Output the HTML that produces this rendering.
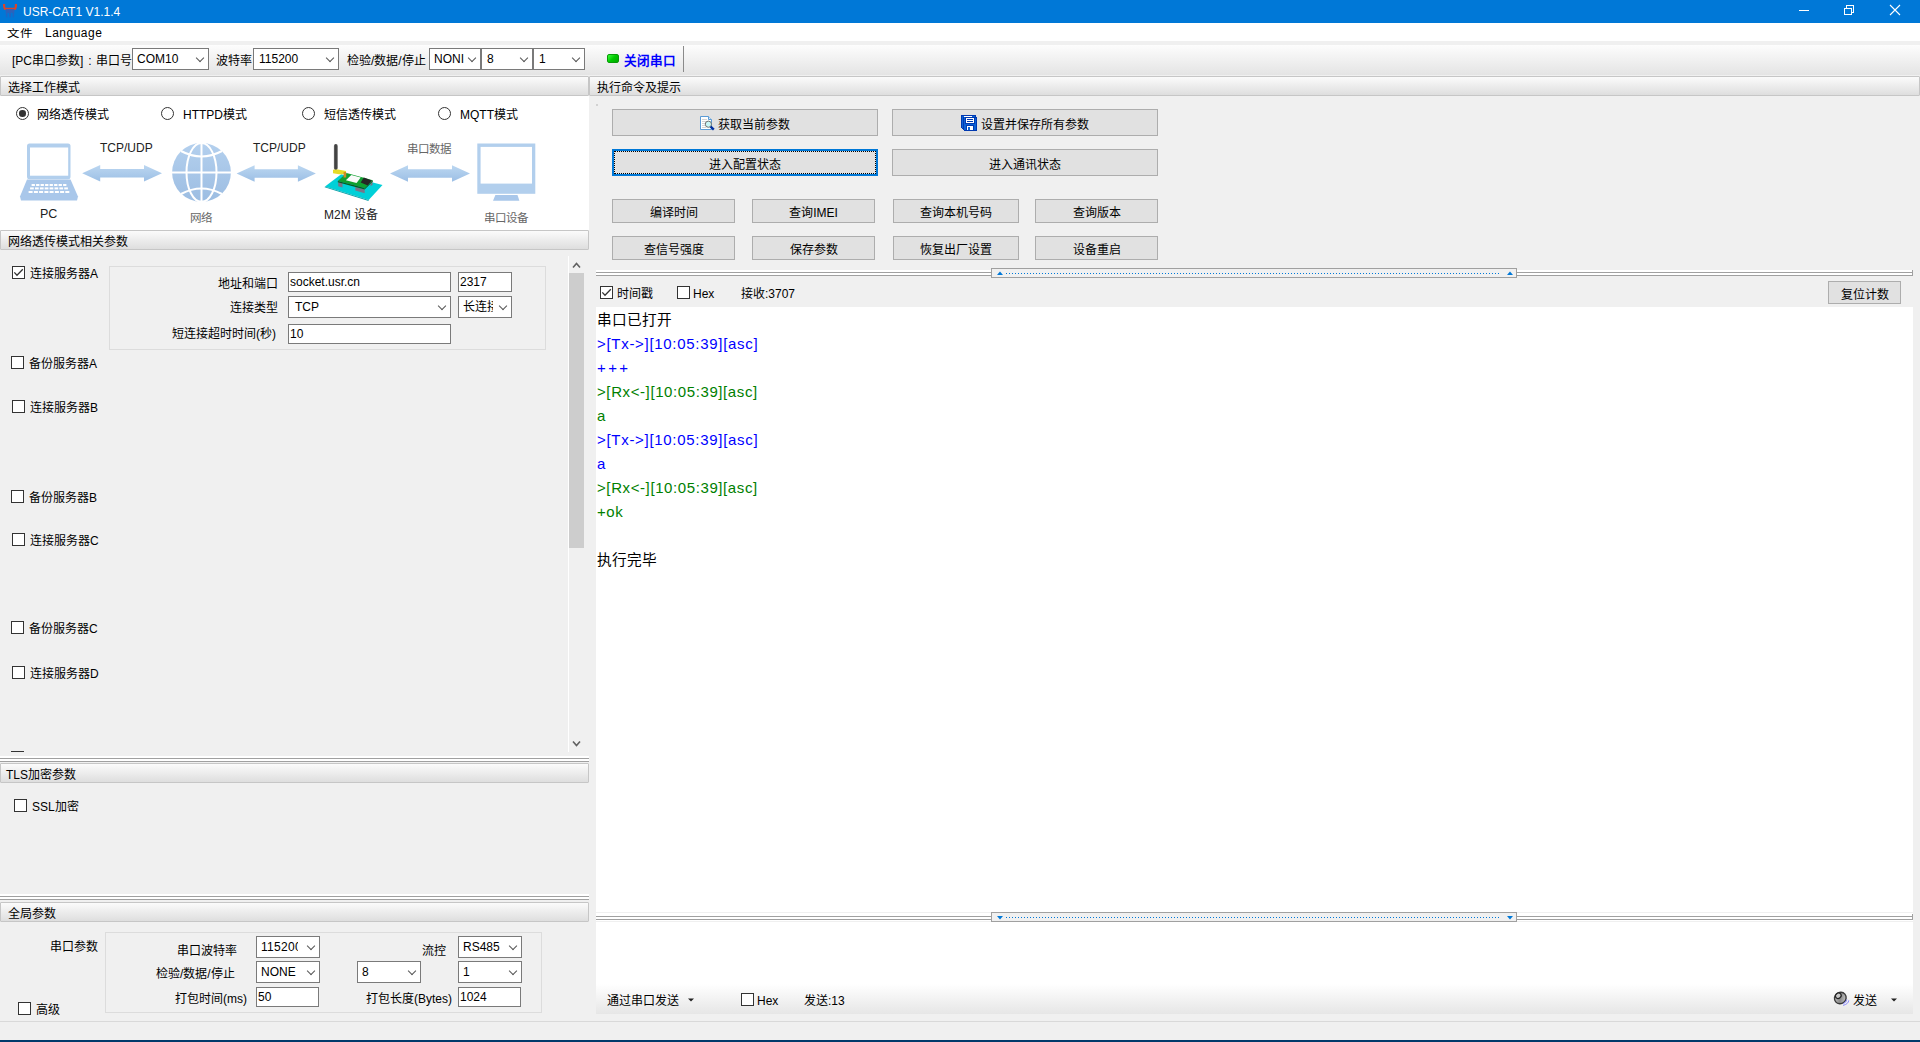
<!DOCTYPE html>
<html lang="zh-CN">
<head>
<meta charset="utf-8">
<style>
*{margin:0;padding:0;box-sizing:border-box;}
html,body{width:1920px;height:1042px;overflow:hidden;background:#f0f0f0;font-family:"Liberation Sans",sans-serif;font-size:12px;color:#000;}
.a{position:absolute;}
.t{position:absolute;white-space:nowrap;line-height:16px;}
.hdr{position:absolute;height:20px;border:1px solid #c6c6c6;border-radius:1px;background:linear-gradient(#fbfbfb,#dedede);}
.hdr span{position:absolute;left:7px;top:4px;line-height:14px;white-space:nowrap;}
.btn{position:absolute;background:#e1e1e1;border:1px solid #adadad;text-align:center;line-height:26px;white-space:nowrap;}
.inp{position:absolute;background:#fff;border:1px solid #7a7a7a;line-height:18px;padding-left:1px;white-space:nowrap;overflow:hidden;}
.cmb{position:absolute;background:#fff;border:1px solid #7a7a7a;line-height:20px;padding-left:3px;white-space:nowrap;overflow:hidden;}
.cmb i{position:absolute;right:5px;top:6px;width:6px;height:6px;border-right:1px solid #555;border-bottom:1px solid #555;transform:rotate(45deg);}
.cb{position:absolute;width:13px;height:13px;border:1px solid #333;background:#fff;}
.rd{position:absolute;width:13px;height:13px;border:1px solid #333;border-radius:50%;background:#fff;}
.grp{position:absolute;border:1px solid #dcdcdc;}
.spl{position:absolute;height:6px;border-top:1px solid #fff;}
</style>
</head>
<body>
<!-- title bar -->
<div class="a" style="left:0;top:0;width:1920px;height:23px;background:#0078d7;"></div>
<svg class="a" style="left:3px;top:3px;" width="14" height="16" viewBox="0 0 14 16">
<defs><linearGradient id="ib" x1="0" y1="0" x2="0" y2="1"><stop offset="0" stop-color="#3a5fb0"/><stop offset="1" stop-color="#2a5cc0" stop-opacity="0.5"/></linearGradient></defs>
<path d="M1,1 Q1,5 2,5.8 H12 Q13,5 13,1" fill="none" stroke="#d8452a" stroke-width="2.2"/>
<path d="M2.5,6 H11.5 L11,14.5 H9.5 V10 H8 V14.5 H6 V10 H4.5 V14.5 H3 Z" fill="url(#ib)"/>
</svg>
<div class="t" style="left:23px;top:4px;color:#fff;font-size:12px;">USR-CAT1 V1.1.4</div>
<div class="a" style="left:1799px;top:10px;width:10px;height:1px;background:#fff;"></div>
<svg class="a" style="left:1843px;top:4px;" width="13" height="13" viewBox="0 0 13 13" shape-rendering="crispEdges">
<rect x="1.5" y="4.5" width="7" height="6" fill="none" stroke="#fff" stroke-width="1"/>
<path d="M3.5,4.5 V1.5 H10.5 V8.5 H8.5" fill="none" stroke="#fff" stroke-width="1"/>
</svg>
<svg class="a" style="left:1889px;top:4px;" width="12" height="12" viewBox="0 0 12 12">
<path d="M1,1 L11,11 M11,1 L1,11" stroke="#fff" stroke-width="1.1"/>
</svg>
<!-- menu -->
<div class="a" style="left:0;top:23px;width:1920px;height:18px;background:#fff;"></div>
<div class="t" style="left:7px;top:25px;font-size:12.5px;transform:scaleY(0.86);transform-origin:0 12px;">文件</div>
<div class="t" style="left:45px;top:25px;letter-spacing:0.5px;">Language</div>
<!-- toolbar -->
<div class="a" style="left:0;top:45px;width:1920px;height:30px;background:linear-gradient(#fdfdfd,#e4e4e4);"></div>


<div class="t" style="left:12px;top:53px;">[PC串口参数]<span style="margin-left:5px;margin-right:4px;">:</span>串口号</div>
<div class="cmb" style="left:132px;top:48px;width:77px;height:22px;padding-left:4px;">COM10<i></i></div>
<div class="t" style="left:216px;top:53px;">波特率</div>
<div class="cmb" style="left:253px;top:48px;width:86px;height:22px;padding-left:5px;">115200<i></i></div>
<div class="t" style="left:347px;top:53px;">检验/数据/停止</div>
<div class="cmb" style="left:429px;top:48px;width:52px;height:22px;padding-left:4px;">NONI<i></i></div>
<div class="cmb" style="left:481px;top:48px;width:52px;height:22px;padding-left:5px;">8<i></i></div>
<div class="cmb" style="left:533px;top:48px;width:52px;height:22px;padding-left:5px;">1<i></i></div>
<div class="a" style="left:607px;top:54px;width:12px;height:9px;border:1px solid #079b07;border-radius:2px;background:linear-gradient(135deg,#3dff3d,#00c800 50%,#00a800);"></div>
<div class="t" style="left:624px;top:53px;color:#0000ff;font-weight:bold;font-size:12.6px;">关闭串口</div>
<div class="a" style="left:683px;top:46px;width:1px;height:26px;background:#8a8a8a;"></div>

<!-- left headers -->
<div class="hdr" style="left:0;top:76px;width:589px;"><span>选择工作模式</span></div>
<div class="a" style="left:0;top:96px;width:589px;height:134px;background:#fff;"></div>
<svg class="a" style="left:0;top:96px;" width="588" height="134" viewBox="0 0 588 134">
<defs><linearGradient id="ga" x1="0" y1="0" x2="0" y2="1"><stop offset="0" stop-color="#bcd7f1"/><stop offset="1" stop-color="#9cbfe5"/></linearGradient><linearGradient id="gb" x1="0" y1="0" x2="0" y2="1"><stop offset="0" stop-color="#b4d0ee"/><stop offset="1" stop-color="#9cbde2"/></linearGradient></defs>
<rect x="27" y="47.4" width="43.5" height="35.8" rx="2.5" fill="#b2cfed"/>
<rect x="30" y="51.5" width="38.2" height="28.2" fill="#fff"/>
<polygon points="27,83.5 70.5,83.5 78,100.5 77,104.5 21,104.5 20,100.5" fill="#a9c7ea"/>
<rect x="31.6" y="88.0" width="3.3" height="2" fill="#fff"/><rect x="36.1" y="88.0" width="3.3" height="2" fill="#fff"/><rect x="40.6" y="88.0" width="3.3" height="2" fill="#fff"/><rect x="45.1" y="88.0" width="3.3" height="2" fill="#fff"/><rect x="49.6" y="88.0" width="3.3" height="2" fill="#fff"/><rect x="54.1" y="88.0" width="3.3" height="2" fill="#fff"/><rect x="58.6" y="88.0" width="3.3" height="2" fill="#fff"/><rect x="63.1" y="88.0" width="3.3" height="2" fill="#fff"/><rect x="30.1" y="91.4" width="3.7" height="2" fill="#fff"/><rect x="35.0" y="91.4" width="3.7" height="2" fill="#fff"/><rect x="39.9" y="91.4" width="3.7" height="2" fill="#fff"/><rect x="44.7" y="91.4" width="3.7" height="2" fill="#fff"/><rect x="49.6" y="91.4" width="3.7" height="2" fill="#fff"/><rect x="54.5" y="91.4" width="3.7" height="2" fill="#fff"/><rect x="59.4" y="91.4" width="3.7" height="2" fill="#fff"/><rect x="64.2" y="91.4" width="3.7" height="2" fill="#fff"/><rect x="28.6" y="95.0" width="4.0" height="2" fill="#fff"/><rect x="33.9" y="95.0" width="4.0" height="2" fill="#fff"/><rect x="39.1" y="95.0" width="4.0" height="2" fill="#fff"/><rect x="44.4" y="95.0" width="4.0" height="2" fill="#fff"/><rect x="49.6" y="95.0" width="4.0" height="2" fill="#fff"/><rect x="54.9" y="95.0" width="4.0" height="2" fill="#fff"/><rect x="60.1" y="95.0" width="4.0" height="2" fill="#fff"/><rect x="65.3" y="95.0" width="4.0" height="2" fill="#fff"/>
<polygon fill="url(#ga)" points="82.2,77.3 100.2,69.0 100.2,73.0 144.0,73.0 144.0,69.0 162.0,77.3 144.0,85.6 144.0,81.6 100.2,81.6 100.2,85.6"/>
<circle cx="201.5" cy="76.4" r="29.4" fill="url(#gb)"/>
<g stroke="#fff" stroke-width="2" fill="none">
<line x1="201.5" y1="46" x2="201.5" y2="106"/>
<line x1="172" y1="76.4" x2="231" y2="76.4"/>
<ellipse cx="201.5" cy="76.4" rx="15" ry="29.4"/>
<path d="M181,55 Q201.5,66 222,55"/>
<path d="M181,98 Q201.5,87 222,98"/>
</g>
<polygon fill="url(#ga)" points="236.6,77.5 254.6,69.2 254.6,73.2 297.9,73.2 297.9,69.2 315.9,77.5 297.9,85.8 297.9,81.8 254.6,81.8 254.6,85.8"/>
<polygon points="325,90.4 341.2,78.3 382.5,89 368.7,104.1" fill="#00d0d8"/>
<polygon points="325,90.4 368.7,104.1 368.5,105 324.6,91.2" fill="#0aa0a8"/>
<polygon points="338.2,86 342.5,87.2 342.5,91.5 338.2,90.2" fill="#7a7488"/>
<polygon points="355.3,91 364.7,93.6 364.7,97.2 355.3,94.6" fill="#7a7488"/>
<polygon points="370.5,85.5 372.5,84.5 372.5,89 370.5,90" fill="#7a7488"/>
<polygon points="337.8,85 346.6,76.9 372.8,84.3 364.7,92" fill="#10a030"/>
<polygon points="337.8,85 364.7,92 364.7,93.5 337.8,86.3" fill="#0a5a20"/>
<polygon points="364.7,92 372.8,84.3 372.8,85.6 364.7,93.5" fill="#0a6a20"/>
<polygon points="345.9,84.3 351.3,78.9 360.7,81.6 356.6,87" fill="#fafafa"/>
<polygon points="360.7,86.4 363.8,81.5 371.7,84.4 367.7,89.6" fill="#252525"/>
<defs><linearGradient id="ant" x1="0" y1="0" x2="1" y2="0"><stop offset="0" stop-color="#6a6a6a"/><stop offset="0.5" stop-color="#3a3a3a"/><stop offset="1" stop-color="#5a5a5a"/></linearGradient></defs>
<rect x="333.9" y="48" width="3.8" height="26" rx="1.9" fill="url(#ant)"/>
<polygon points="333,73.8 338,73.6 346,75 346,78.3 339,78.3 333,77.3" fill="#e6dc28"/>
<rect x="343.6" y="76" width="2.6" height="5.5" fill="#d08a28"/>
<polygon fill="url(#ga)" points="390.0,77.5 408.0,69.2 408.0,73.2 452.0,73.2 452.0,69.2 470.0,77.5 452.0,85.8 452.0,81.8 408.0,81.8 408.0,85.8"/>
<rect x="477.3" y="47.5" width="58" height="50.3" fill="#b2cfed"/>
<rect x="480.6" y="50.9" width="51.4" height="36.7" fill="#fff"/>
<polygon points="495.4,99.1 517.5,99.1 519.4,104.8 493,104.8" fill="#a9c7ea"/>
</svg>
<div class="t" style="left:100px;top:140px;font-size:12px;color:#222;">TCP/UDP</div>
<div class="t" style="left:253px;top:140px;font-size:12px;color:#222;">TCP/UDP</div>
<div class="t" style="left:407px;top:141px;color:#666;font-size:11.5px;">串口数据</div>
<div class="t" style="left:40px;top:206px;font-size:12.5px;color:#222;">PC</div>
<div class="t" style="left:190px;top:210px;color:#666;font-size:11.5px;">网络</div>
<div class="t" style="left:324px;top:207px;font-size:12px;color:#222;">M2M 设备</div>
<div class="t" style="left:484px;top:210px;color:#666;font-size:11.5px;">串口设备</div>

<div class="rd" style="left:16px;top:107px;"><div class="a" style="left:2.2px;top:2.2px;width:6.6px;height:6.6px;border-radius:50%;background:#333;"></div></div>
<div class="t" style="left:37px;top:107px;">网络透传模式</div>
<div class="rd" style="left:161px;top:107px;"></div>
<div class="t" style="left:183px;top:107px;">HTTPD模式</div>
<div class="rd" style="left:302px;top:107px;"></div>
<div class="t" style="left:324px;top:107px;">短信透传模式</div>
<div class="rd" style="left:438px;top:107px;"></div>
<div class="t" style="left:460px;top:107px;">MQTT模式</div>
<div class="hdr" style="left:0;top:230px;width:589px;"><span>网络透传模式相关参数</span></div>
<div class="hdr" style="left:0;top:763px;width:589px;"><span style="left:5px;">TLS加密参数</span></div>
<div class="hdr" style="left:0;top:902px;width:589px;"><span>全局参数</span></div>


<div class="cb" style="left:12px;top:266px;"><svg class="a" style="left:0;top:0;" width="11" height="11" viewBox="0 0 11 11"><polyline points="1.3,5.4 4,8.2 9.8,2.3" fill="none" stroke="#333" stroke-width="1.3"/></svg></div>
<div class="t" style="left:30px;top:266px;">连接服务器A</div>
<div class="grp" style="left:109px;top:266px;width:437px;height:84px;"></div>
<div class="t" style="left:218px;top:276px;">地址和端口</div>
<div class="inp" style="left:288px;top:272px;width:163px;height:20px;">socket.usr.cn</div>
<div class="inp" style="left:458px;top:272px;width:54px;height:20px;">2317</div>
<div class="t" style="left:230px;top:300px;">连接类型</div>
<div class="cmb" style="left:288px;top:296px;width:163px;height:22px;padding-left:6px;">TCP<i></i></div>
<div class="cmb" style="left:458px;top:296px;width:54px;height:22px;padding-left:4px;"><span style="display:inline-block;width:30px;overflow:hidden;vertical-align:top;">长连接</span><i></i></div>
<div class="t" style="left:172px;top:326px;">短连接超时时间(秒)</div>
<div class="inp" style="left:288px;top:324px;width:163px;height:20px;">10</div>
<div class="cb" style="left:11px;top:356px;"></div>
<div class="t" style="left:29px;top:356px;">备份服务器A</div>
<div class="cb" style="left:12px;top:400px;"></div>
<div class="t" style="left:30px;top:400px;">连接服务器B</div>
<div class="cb" style="left:11px;top:490px;"></div>
<div class="t" style="left:29px;top:490px;">备份服务器B</div>
<div class="cb" style="left:12px;top:533px;"></div>
<div class="t" style="left:30px;top:533px;">连接服务器C</div>
<div class="cb" style="left:11px;top:621px;"></div>
<div class="t" style="left:29px;top:621px;">备份服务器C</div>
<div class="cb" style="left:12px;top:666px;"></div>
<div class="t" style="left:30px;top:666px;">连接服务器D</div>
<div class="a" style="left:11px;top:751px;width:13px;height:1px;background:#333;"></div>
<!-- scrollbar -->
<div class="a" style="left:568px;top:256px;width:1px;height:496px;background:#fff;"></div>
<svg class="a" style="left:572px;top:261px;" width="9" height="8" viewBox="0 0 9 8"><polyline points="1,6.5 4.5,2.5 8,6.5" fill="none" stroke="#606060" stroke-width="1.6"/></svg>
<div class="a" style="left:569px;top:273px;width:15px;height:275px;background:#cdcdcd;"></div>
<svg class="a" style="left:572px;top:740px;" width="9" height="8" viewBox="0 0 9 8"><polyline points="1,1.5 4.5,5.5 8,1.5" fill="none" stroke="#606060" stroke-width="1.6"/></svg>
<!-- splitter left 1 -->
<div class="a" style="left:0;top:756px;width:589px;height:6px;background:#fff;"><div class="a" style="left:0;top:2px;width:100%;height:1px;background:#a0a0a0;"></div><div class="a" style="left:0;top:5px;width:100%;height:1px;background:#a0a0a0;"></div></div>
<!-- TLS -->
<div class="cb" style="left:14px;top:799px;"></div>
<div class="t" style="left:32px;top:799px;">SSL加密</div>
<!-- splitter left 2 -->
<div class="a" style="left:0;top:894px;width:589px;height:6px;background:#fff;"><div class="a" style="left:0;top:2px;width:100%;height:1px;background:#a0a0a0;"></div><div class="a" style="left:0;top:5px;width:100%;height:1px;background:#a0a0a0;"></div></div>
<!-- global -->
<div class="t" style="left:50px;top:939px;">串口参数</div>
<div class="grp" style="left:105px;top:932px;width:437px;height:81px;"></div>
<div class="t" style="left:177px;top:943px;">串口波特率</div>
<div class="cmb" style="left:256px;top:936px;width:64px;height:22px;padding-left:4px;"><span style="display:inline-block;width:37px;overflow:hidden;vertical-align:top;letter-spacing:0.3px;">115200</span><i></i></div>
<div class="t" style="left:422px;top:943px;">流控</div>
<div class="cmb" style="left:458px;top:936px;width:64px;height:22px;padding-left:4px;">RS485<i></i></div>
<div class="t" style="left:156px;top:966px;">检验/数据/停止</div>
<div class="cmb" style="left:256px;top:961px;width:64px;height:22px;padding-left:4px;">NONE<i></i></div>
<div class="cmb" style="left:357px;top:961px;width:64px;height:22px;padding-left:4px;">8<i></i></div>
<div class="cmb" style="left:458px;top:961px;width:64px;height:22px;padding-left:4px;">1<i></i></div>
<div class="t" style="left:175px;top:991px;">打包时间(ms)</div>
<div class="inp" style="left:256px;top:987px;width:63px;height:20px;">50</div>
<div class="t" style="left:366px;top:991px;">打包长度(Bytes)</div>
<div class="inp" style="left:458px;top:987px;width:63px;height:20px;">1024</div>
<div class="cb" style="left:18px;top:1002px;"></div>
<div class="t" style="left:36px;top:1002px;">高级</div>

<!-- right header -->
<div class="hdr" style="left:589px;top:76px;width:1331px;"><span>执行命令及提示</span></div>

<!-- log area -->
<div class="a" style="left:596px;top:307px;width:1317px;height:605px;background:#fff;"></div>
<div class="a" style="left:596px;top:922px;width:1317px;height:92px;background:linear-gradient(#fff 0,#fff 62px,#e6e6e6 92px);"></div>


<!-- buttons -->
<div class="a" style="left:596px;top:104px;width:2px;height:2px;background:#c8c8c8;border-radius:1px;"></div>
<div class="btn" style="left:612px;top:109px;width:266px;height:27px;line-height:25px;"></div>
<svg class="a" style="left:700px;top:116px;" width="16" height="16" viewBox="0 0 16 16">
<path d="M0.5,0.5 H8.5 L11.5,3.5 V13.5 H0.5 Z" fill="#fff" stroke="#5b9bd5" stroke-width="1"/>
<path d="M8.5,0.5 V3.5 H11.5" fill="#dce9f6" stroke="#5b9bd5" stroke-width="1"/>
<rect x="2" y="3" width="5" height="1" fill="#d4d4d4"/><rect x="2" y="5" width="4" height="1" fill="#d4d4d4"/><rect x="2" y="7" width="3" height="1" fill="#d4d4d4"/><rect x="2" y="9" width="3" height="1" fill="#d4d4d4"/><rect x="2" y="11" width="4" height="1" fill="#d4d4d4"/>
<circle cx="8.4" cy="8.2" r="3.1" fill="#c8f6f6" stroke="#6e6e6e" stroke-width="1"/>
<line x1="10.6" y1="10.6" x2="13.8" y2="13.6" stroke="#0030a0" stroke-width="2.4"/>
</svg>
<div class="t" style="left:718px;top:117px;">获取当前参数</div>
<div class="btn" style="left:892px;top:109px;width:266px;height:27px;"></div>
<svg class="a" style="left:960px;top:114px;" width="18" height="18" viewBox="0 0 18 18" shape-rendering="crispEdges">
<polygon points="1,1 16,1 16,3 17,3 17,17 4,17 1,14" fill="#0038b0"/>
<polygon points="2,2 15,2 15,4 16,4 16,16 4,16 2,14" fill="#0a62d6"/>
<rect x="3" y="3" width="1" height="12" fill="#0038b0"/>
<rect x="4" y="2" width="8" height="1" fill="#fff"/>
<rect x="5" y="3" width="10" height="7" fill="#0038b0"/>
<rect x="6" y="4" width="8" height="5" fill="#fff"/>
<rect x="7" y="5" width="6" height="1" fill="#0038b0"/>
<rect x="7" y="7" width="6" height="1" fill="#0038b0"/>
<rect x="6" y="11" width="8" height="6" fill="#0038b0"/>
<rect x="7" y="12" width="6" height="4" fill="#fff"/>
<rect x="8" y="13" width="2" height="3" fill="#0a62d6"/>
</svg>
<div class="t" style="left:981px;top:117px;">设置并保存所有参数</div>
<div class="btn" style="left:612px;top:149px;width:266px;height:27px;border:2px solid #0078d7;line-height:29px;"><div class="a" style="left:0;top:0;right:0;bottom:0;border:1px dotted #000;"></div>进入配置状态</div>
<div class="btn" style="left:892px;top:149px;width:266px;height:27px;line-height:31px;">进入通讯状态</div>
<div class="btn" style="left:612px;top:199px;width:123px;height:24px;">编译时间</div>
<div class="btn" style="left:752px;top:199px;width:123px;height:24px;">查询IMEI</div>
<div class="btn" style="left:893px;top:199px;width:126px;height:24px;">查询本机号码</div>
<div class="btn" style="left:1035px;top:199px;width:123px;height:24px;">查询版本</div>
<div class="btn" style="left:612px;top:236px;width:123px;height:24px;">查信号强度</div>
<div class="btn" style="left:752px;top:236px;width:123px;height:24px;">保存参数</div>
<div class="btn" style="left:893px;top:236px;width:126px;height:24px;">恢复出厂设置</div>
<div class="btn" style="left:1035px;top:236px;width:123px;height:24px;">设备重启</div>
<!-- upper splitter -->
<div class="a" style="left:596px;top:270px;width:1317px;height:6px;background:#fff;"></div>
<div class="a" style="left:596px;top:272px;width:1317px;height:1px;background:#a0a0a0;"></div>
<div class="a" style="left:596px;top:275px;width:1317px;height:1px;background:#a0a0a0;"></div>
<div class="a" style="left:1912px;top:270px;width:1px;height:6px;background:#a0a0a0;"></div>
<div class="a" style="left:991px;top:268px;width:526px;height:10px;background:#f0f0f0;border:1px solid #a0a0a0;"></div>
<svg class="a" style="left:997px;top:271px;" width="6" height="4" viewBox="0 0 6 4"><polygon points="0,4 3,0.5 6,4" fill="#0078d7"/></svg>
<svg class="a" style="left:1507px;top:271px;" width="6" height="4" viewBox="0 0 6 4"><polygon points="0,4 3,0.5 6,4" fill="#0078d7"/></svg>
<div class="a" style="left:1006px;top:273px;width:494px;height:1px;background:repeating-linear-gradient(90deg,#0078d7 0,#0078d7 1px,transparent 1px,transparent 3px);"></div>
<!-- recv bar -->
<div class="cb" style="left:600px;top:286px;"><svg class="a" style="left:0;top:0;" width="11" height="11" viewBox="0 0 11 11"><polyline points="1.3,5.4 4,8.2 9.8,2.3" fill="none" stroke="#333" stroke-width="1.3"/></svg></div>
<div class="t" style="left:617px;top:286px;">时间戳</div>
<div class="cb" style="left:677px;top:286px;"></div>
<div class="t" style="left:693px;top:286px;">Hex</div>
<div class="t" style="left:741px;top:286px;">接收:3707</div>
<div class="btn" style="left:1828px;top:281px;width:73px;height:23px;line-height:27px;">复位计数</div>
<!-- log -->
<div class="a" style="left:597px;top:308px;font-size:15px;line-height:24px;white-space:nowrap;letter-spacing:0.6px;">
<div style="letter-spacing:0;font-size:14.67px;">串口已打开</div>
<div style="color:#0000ff;letter-spacing:0.7px;">&gt;[Tx-&gt;][10:05:39][asc]</div>
<div style="color:#0000ff;letter-spacing:2.4px;">+++</div>
<div style="color:#008000;">&gt;[Rx&lt;-][10:05:39][asc]</div>
<div style="color:#008000;">a</div>
<div style="color:#0000ff;letter-spacing:0.7px;">&gt;[Tx-&gt;][10:05:39][asc]</div>
<div style="color:#0000ff;">a</div>
<div style="color:#008000;">&gt;[Rx&lt;-][10:05:39][asc]</div>
<div style="color:#008000;">+ok</div>
<div style="height:24px;"></div>
<div style="letter-spacing:0;font-size:14.67px;">执行完毕</div>
</div>
<!-- lower splitter -->
<div class="a" style="left:596px;top:912px;width:1317px;height:10px;background:#fff;border-top:1px solid #f0f0f0;border-bottom:1px solid #f0f0f0;"></div>
<div class="a" style="left:596px;top:916px;width:1317px;height:1px;background:#a0a0a0;"></div>
<div class="a" style="left:596px;top:919px;width:1317px;height:1px;background:#a0a0a0;"></div>
<div class="a" style="left:1912px;top:914px;width:1px;height:6px;background:#a0a0a0;"></div>
<div class="a" style="left:991px;top:912px;width:526px;height:10px;background:#f0f0f0;border:1px solid #a0a0a0;"></div>
<svg class="a" style="left:997px;top:916px;" width="6" height="4" viewBox="0 0 6 4"><polygon points="0,0 6,0 3,3.5" fill="#0078d7"/></svg>
<svg class="a" style="left:1507px;top:916px;" width="6" height="4" viewBox="0 0 6 4"><polygon points="0,0 6,0 3,3.5" fill="#0078d7"/></svg>
<div class="a" style="left:1006px;top:917px;width:494px;height:1px;background:repeating-linear-gradient(90deg,#0078d7 0,#0078d7 1px,transparent 1px,transparent 3px);"></div>
<!-- send bar -->
<div class="t" style="left:607px;top:993px;">通过串口发送</div>
<svg class="a" style="left:688px;top:998px;" width="6" height="4" viewBox="0 0 6 4"><polygon points="0,0.5 6,0.5 3,3.5" fill="#222"/></svg>
<div class="cb" style="left:741px;top:993px;"></div>
<div class="t" style="left:757px;top:993px;">Hex</div>
<div class="t" style="left:804px;top:993px;">发送:13</div>
<svg class="a" style="left:1832px;top:990px;" width="20" height="19" viewBox="0 0 20 19">
<defs><linearGradient id="sp" x1="0" y1="0" x2="1" y2="1"><stop offset="0" stop-color="#d0d0d0"/><stop offset="0.5" stop-color="#8a8a8a"/><stop offset="1" stop-color="#d8d8d8"/></linearGradient></defs>
<ellipse cx="8.3" cy="8" rx="6" ry="5.6" transform="rotate(-40 8.3 8)" fill="url(#sp)" stroke="#3a3a3a" stroke-width="1.4"/>
<ellipse cx="6.3" cy="5.8" rx="3" ry="2.6" transform="rotate(-40 6.3 5.8)" fill="#c8c8c8" stroke="#222" stroke-width="1.2"/>
<path d="M11.2,13.6 Q14.5,12.5 14.8,9.5" fill="none" stroke="#8a8aff" stroke-width="1"/>
<path d="M11,15.4 Q16.5,14 16.8,10.3" fill="none" stroke="#8a8aff" stroke-width="1"/>
</svg>
<div class="t" style="left:1853px;top:993px;">发送</div>
<svg class="a" style="left:1891px;top:998px;" width="6" height="4" viewBox="0 0 6 4"><polygon points="0,0.5 6,0.5 3,3.5" fill="#222"/></svg>

<!-- status -->
<div class="a" style="left:0;top:1021px;width:1920px;height:1px;background:#d9d9d9;"></div>
<div class="a" style="left:0;top:1040px;width:1920px;height:2px;background:#00396b;"></div>
</body>
</html>
